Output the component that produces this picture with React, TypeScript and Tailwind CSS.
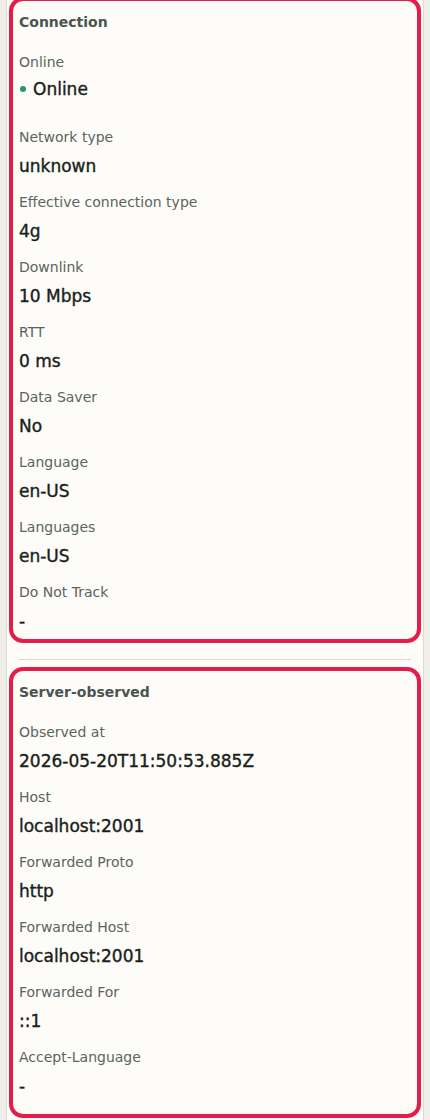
import React from 'react';

type Item = { label: string; value: React.ReactNode };

const connection: Item[] = [
  { label: 'Network type', value: 'unknown' },
  { label: 'Effective connection type', value: '4g' },
  { label: 'Downlink', value: '10 Mbps' },
  { label: 'RTT', value: '0 ms' },
  { label: 'Data Saver', value: 'No' },
  { label: 'Language', value: 'en-US' },
  { label: 'Languages', value: 'en-US' },
  { label: 'Do Not Track', value: '-' },
];

const server: Item[] = [
  { label: 'Observed at', value: '2026-05-20T11:50:53.885Z' },
  { label: 'Host', value: 'localhost:2001' },
  { label: 'Forwarded Proto', value: 'http' },
  { label: 'Forwarded Host', value: 'localhost:2001' },
  { label: 'Forwarded For', value: '::1' },
  { label: 'Accept-Language', value: '-' },
];

const labelCls = 'text-[14px] leading-[20px] text-[#5b6460]';
const valueCls = 'text-[17px] leading-[24px] text-[#1b1f1d] [-webkit-text-stroke:0.4px_#1b1f1d]';

const Field: React.FC<Item> = ({ label, value }) => (
  <div className="flex flex-col gap-[7px]">
    <dt className={labelCls}>{label}</dt>
    <dd className={valueCls}>{value}</dd>
  </div>
);

const Section: React.FC<{ title: string; className?: string; children: React.ReactNode }> = ({
  title,
  className,
  children,
}) => (
  <section className={`rounded-[14px] border-4 border-[#e31c4a] px-[6px] pt-[11px] ${className ?? ''}`}>
    <h2 className="text-[14px] leading-[20px] font-bold text-[#4a5450]">{title}</h2>
    <dl className="mt-5 flex flex-col gap-[14px]">{children}</dl>
  </section>
);

export default function App() {
  return (
    <div
      className="min-h-[1120px] bg-[#efeee9] px-[6px]"
      style={{ fontFamily: '"DejaVu Sans", "Noto Sans CJK JP", sans-serif' }}
    >
      <div className="min-h-[1120px] border-x border-[#dcdad2] bg-[#fdfcf8] px-[2px] pb-1">
        <Section title="Connection" className="-mt-[3px] pb-[6px]">
          <div className="mb-[12px] flex flex-col gap-[5px]">
            <dt className={labelCls}>Online</dt>
            <dd className={`flex items-center gap-[7px] ${valueCls}`}>
              <span className="ml-[1px] inline-block h-[6px] w-[6px] rounded-full bg-[#1f9a6c] [-webkit-text-stroke:0]" />
              Online
            </dd>
          </div>
          {connection.map((it) => (
            <Field key={it.label} {...it} />
          ))}
        </Section>

        <hr className="mx-[10px] mt-4 mb-[7px] border-0 border-t border-[#dddbd0]" />

        <Section title="Server-observed" className="pb-[16px]">
          {server.map((it) => (
            <Field key={it.label} {...it} />
          ))}
        </Section>
      </div>
    </div>
  );
}
